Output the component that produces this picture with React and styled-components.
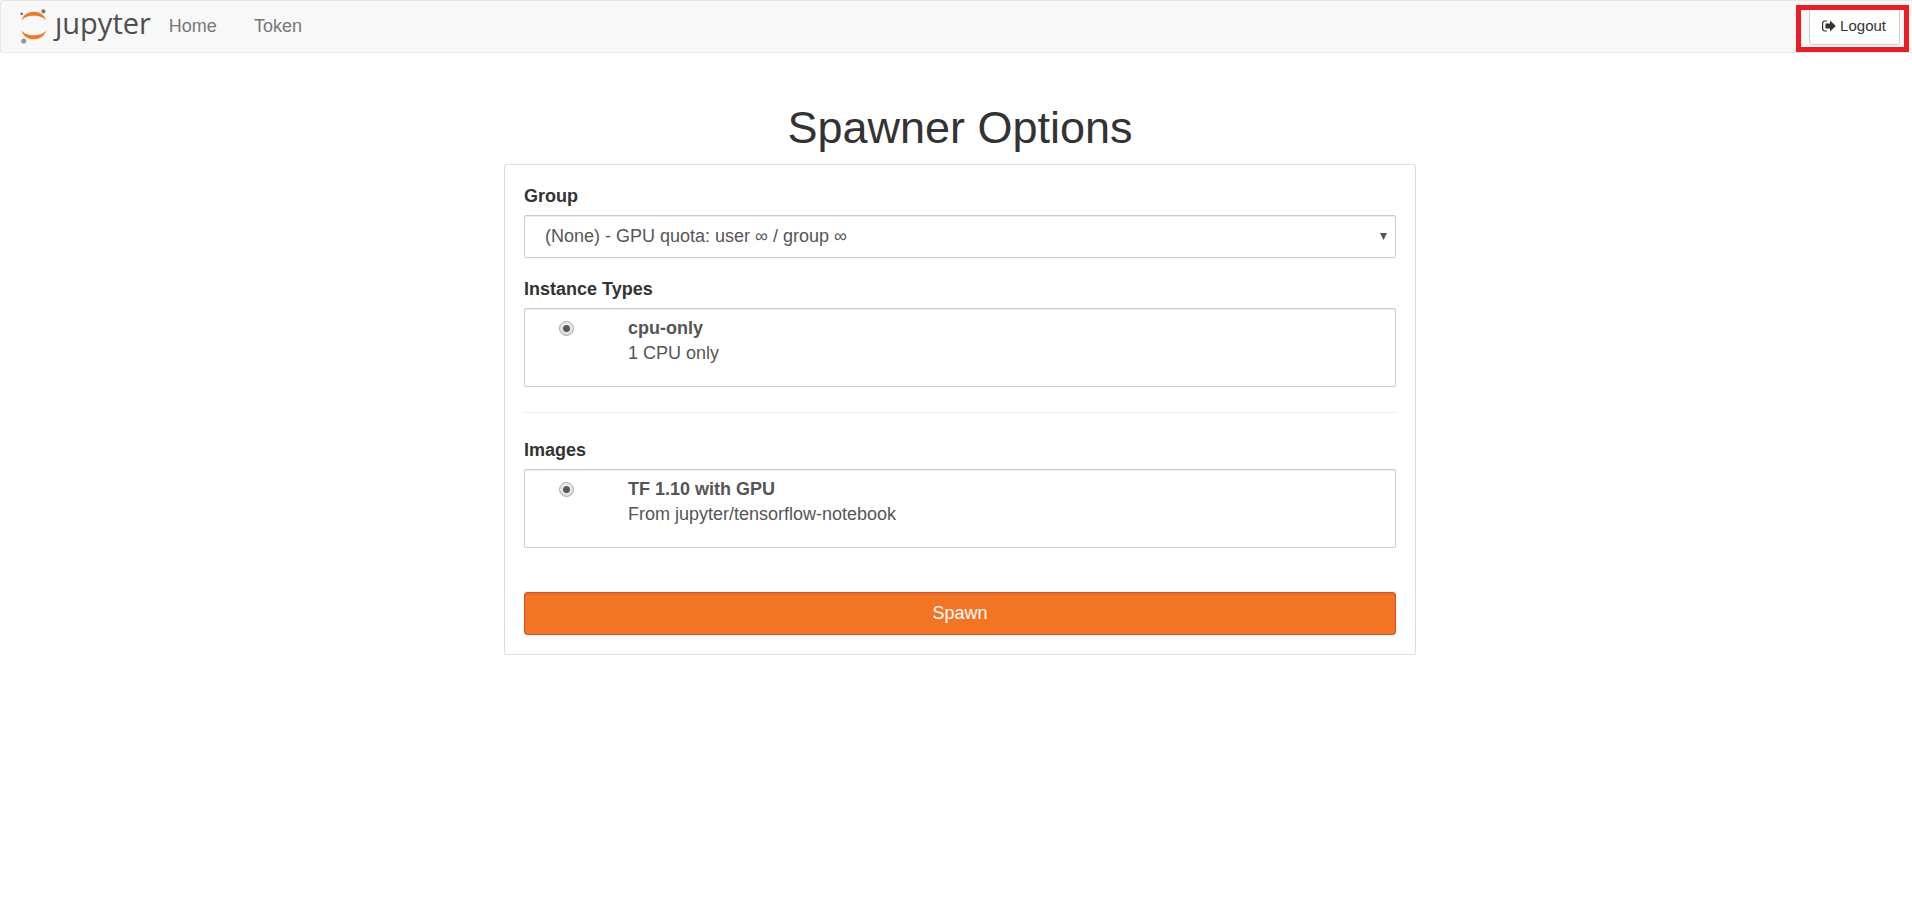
import React from "react";
import styled, { createGlobalStyle } from "styled-components";

const GlobalStyle = createGlobalStyle`
  *, *::before, *::after { box-sizing: border-box; }
  body {
    margin: 0;
    background: #fff;
    color: #333;
    font: 18px/25px "Liberation Sans", Arial, sans-serif;
    overflow-x: hidden;
  }
  button, select, input { font: inherit; margin: 0; }
`;

const Navbar = styled.header`
  display: flex;
  align-items: center;
  justify-content: space-between;
  height: 53px;
  padding: 0 12px 0 18px;
  background: #f8f8f8;
  border: 1px solid #e7e7e7;
  border-right: 0;
  border-radius: 3px 0 0 3px;
`;

const NavGroup = styled.nav`
  display: flex;
  align-items: center;
`;

const Brand = styled.a`
  display: flex;
  align-items: center;
  gap: 7px;
  margin-right: 18px;
  padding-bottom: 2px;
  color: #4e4e4e;
  text-decoration: none;
`;

const BrandName = styled.span`
  font: 29px/40px "Open Sans", "Noto Sans", sans-serif;
  padding-bottom: 6px;
`;

const NavLink = styled.a`
  margin-right: 37px;
  color: #777;
  text-decoration: none;
`;

const LogoutArea = styled.div`
  position: relative;
`;

const LogoutButton = styled.button`
  display: flex;
  align-items: center;
  gap: 4px;
  height: 37px;
  padding: 0 13px 2px 12px;
  background: #fff;
  border: 1px solid #ccc;
  border-radius: 3px;
  color: #333;
  font-size: 15px;
  line-height: 22px;
`;

const Highlight = styled.div`
  position: absolute;
  inset: -3px -9px -7px -13px;
  border: 5px solid #ed1c24;
  pointer-events: none;
`;

const Main = styled.main`
  display: flex;
  flex-direction: column;
  align-items: center;
  padding: 50px 0 0 8px;
`;

const Title = styled.h1`
  margin: 0 0 11px;
  font-size: 45px;
  font-weight: 400;
  line-height: 50px;
`;

const Card = styled.form`
  display: flex;
  flex-direction: column;
  width: 100%;
  max-width: 912px;
  padding: 19px;
  border: 1px solid #ddd;
  border-radius: 3px;
  box-shadow: 0 1px 1px rgba(0, 0, 0, 0.05);
`;

const Field = styled.div`
  display: flex;
  flex-direction: column;
  gap: 6px;
  margin-bottom: ${(p) => p.$space}px;
`;

const FieldLabel = styled.label`
  font-weight: 700;
`;

const SelectBox = styled.div`
  position: relative;
  color: #555;
`;

const Select = styled.select`
  display: block;
  width: 100%;
  height: 43px;
  padding: 0 32px 0 20px;
  appearance: none;
  background: #fff;
  border: 1px solid #ccc;
  border-radius: 2px;
  box-shadow: inset 0 1px 1px rgba(0, 0, 0, 0.075);
  color: inherit;
`;

const SelectArrow = styled.svg`
  position: absolute;
  top: 18px;
  right: 9px;
  pointer-events: none;
`;

const Option = styled.label`
  display: flex;
  align-items: flex-start;
  gap: 54px;
  padding: 7px 19px 20px 34px;
  border: 1px solid #ccc;
  border-radius: 2px;
  box-shadow: inset 0 1px 1px rgba(0, 0, 0, 0.075);
  color: #555;
`;

const Radio = styled.input`
  appearance: none;
  flex: none;
  width: 15px;
  height: 15px;
  margin-top: 5px;
  border: 1px solid #a9a9a9;
  border-radius: 50%;
  background: linear-gradient(#ececec, #dcdcdc);
  &:checked {
    background: radial-gradient(circle, #5a5a5a 3px, transparent 4px),
      linear-gradient(#ececec, #dcdcdc);
  }
`;

const OptionText = styled.span`
  display: flex;
  flex-direction: column;
`;

const Divider = styled.hr`
  width: 100%;
  margin: 0 0 25px;
  border: 0;
  border-top: 1px solid #eee;
`;

const SpawnButton = styled.button`
  height: 43px;
  background: #f37524;
  border: 1px solid #e34f21;
  border-radius: 3px;
  box-shadow: inset 0 2px 2px rgba(0, 0, 0, 0.06);
  color: #fff;
`;

function JupyterMark() {
  return (
    <svg width="29" height="38" viewBox="19 7 29 38" aria-hidden="true">
      <path fill="#f37726" d="M21.4 20.6C23 15 28 11.8 33.8 11.8S44.6 15 46.2 20.6C44 17.7 39.5 15.8 33.8 15.8S23.6 17.7 21.4 20.6Z" />
      <path fill="#f37726" d="M21.4 30.4C23.6 33.3 28.1 35.2 33.8 35.2S44 33.3 46.2 30.4C44.6 36 39.6 39.2 33.8 39.2S23 36 21.4 30.4Z" />
      <circle cx="21.7" cy="13.9" r="1.4" fill="#767677" />
      <circle cx="43.4" cy="11.3" r="2.1" fill="#767677" />
      <circle cx="23.7" cy="41" r="2.6" fill="#989798" />
    </svg>
  );
}

function LogoutIcon() {
  return (
    <svg width="14" height="12" viewBox="0 0 14 12" aria-hidden="true">
      <path d="M5 1H3Q0.600 1 0.600 3.400V8.600Q0.600 11 3 11H5" fill="none" stroke="#333" strokeWidth="1.200" />
      <path d="M8 0.500L13.800 6L8 11.500V8.500H3.500V3.500H8Z" fill="#333" />
    </svg>
  );
}

function RadioField({ id, label, name, title, detail, space }) {
  return (
    <Field role="radiogroup" aria-labelledby={id} $space={space}>
      <FieldLabel as="span" id={id}>{label}</FieldLabel>
      <Option>
        <Radio type="radio" name={name} value={title} defaultChecked />
        <OptionText>
          <strong>{title}</strong>
          <span>{detail}</span>
        </OptionText>
      </Option>
    </Field>
  );
}

export default function App() {
  return (
    <>
      <GlobalStyle />
      <Navbar>
        <NavGroup>
          <Brand href="#" aria-label="jupyter">
            <JupyterMark />
            <BrandName>ȷupyter</BrandName>
          </Brand>
          <NavLink href="#home">Home</NavLink>
          <NavLink href="#token">Token</NavLink>
        </NavGroup>
        <LogoutArea>
          <LogoutButton type="button">
            <LogoutIcon />
            Logout
          </LogoutButton>
          <Highlight />
        </LogoutArea>
      </Navbar>
      <Main>
        <Title>Spawner Options</Title>
        <Card onSubmit={(e) => e.preventDefault()}>
          <Field $space={19}>
            <FieldLabel htmlFor="group">Group</FieldLabel>
            <SelectBox>
              <Select id="group">
                <option>(None) - GPU quota: user ∞ / group ∞</option>
              </Select>
              <SelectArrow width="7" height="7" viewBox="0 0 7 7" aria-hidden="true">
                <path d="M0 0H7L3.5 7Z" fill="#555" />
              </SelectArrow>
            </SelectBox>
          </Field>
          <RadioField
            id="instance-types"
            label="Instance Types"
            name="instance"
            title="cpu-only"
            detail="1 CPU only"
            space={25}
          />
          <Divider />
          <RadioField
            id="images"
            label="Images"
            name="image"
            title="TF 1.10 with GPU"
            detail="From jupyter/tensorflow-notebook"
            space={44}
          />
          <SpawnButton type="submit">Spawn</SpawnButton>
        </Card>
      </Main>
    </>
  );
}
